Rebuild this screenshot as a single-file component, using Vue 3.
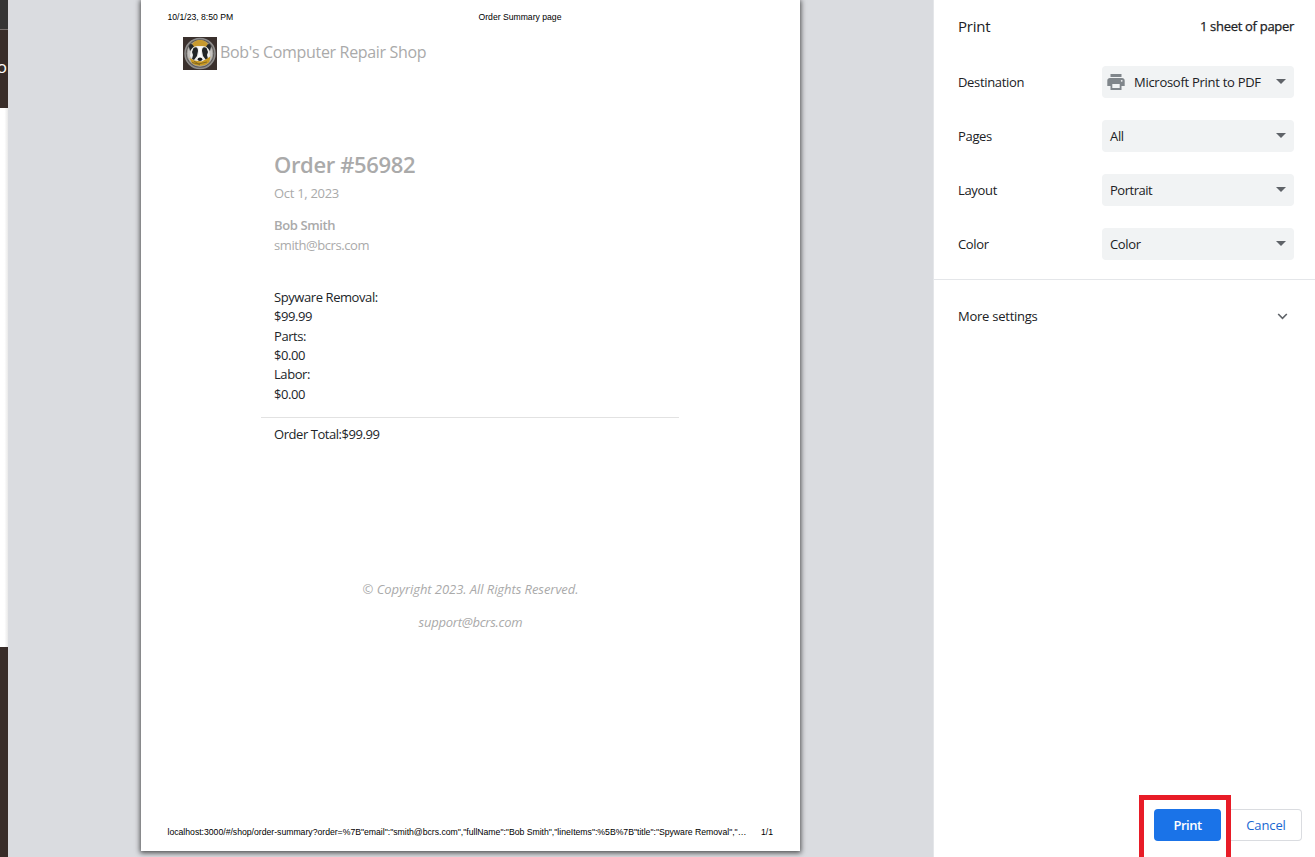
<script setup>
const settings = [
  { label: 'Destination', value: 'Microsoft Print to PDF', cls: 'dest', printer: true },
  { label: 'Pages', value: 'All', cls: 'pages' },
  { label: 'Layout', value: 'Portrait', cls: 'layout' },
  { label: 'Color', value: 'Color', cls: 'color' },
]
const lines = [
  { title: 'Spyware Removal:', price: '$99.99' },
  { title: 'Parts:', price: '$0.00' },
  { title: 'Labor:', price: '$0.00' },
]
const url = 'localhost:3000/#/shop/order-summary?order=%7B"email":"smith@bcrs.com","fullName":"Bob Smith","lineItems":%5B%7B"title":"Spyware Removal","…'
</script>

<template>
  <div class="screen">
    <div class="behind">
      <div class="toolbar"></div>
      <div class="header"><span>o</span></div>
      <div class="content"></div>
      <div class="footer"></div>
    </div>

    <main class="preview">
      <article class="sheet">
        <div class="sheet-head">
          <span class="stamp">10/1/23, 8:50 PM</span>
          <span class="doc-title">Order Summary page</span>
        </div>
        <div class="brand">
          <svg class="logo" viewBox="0 0 34 33">
            <rect width="34" height="33" fill="#3a302d" />
            <circle cx="17" cy="16.500" r="15" fill="#605c5a" stroke="#8f8e8d" stroke-width="1.500" />
            <circle cx="17" cy="16.500" r="12.800" fill="#c4c2bf" stroke="#a5a3a0" stroke-width=".8" />
            <path d="M7.500 12C9 5.500 12 3 17 3s8.500 2.500 9.500 9l-4 1H11z" fill="#c79a30" />
            <path d="M6 10c0-3 2-4 4-2l1 2-4 4zM28 10c0-3-2-4-4-2l-1 2 4 4z" fill="#25282b" />
            <path d="M8 13c2-4 5-4 9-4s7 0 9 4l1 6-4 5-6 3-6-3-4-5z" fill="#eeeeec" />
            <path d="M10.500 11c3-2 4.500 0 4.500 3l-1 5-3 4-2-1 1-4-1-3zM23.500 11c-3-2-4.500 0-4.500 3l1 5 3 4 2-1-1-4 1-3z" fill="#222527" />
            <path d="M6.500 21l5 2.500 4 .5 3 .5 4-2 5-3-1 5c-3 5-14 6-18 1z" fill="#c99922" />
            <path d="M15.500 10h3l-.5 6 1.500 5-2.500 2-2.500-2 1.500-5z" fill="#fff" />
            <ellipse cx="17" cy="22.300" rx="2.300" ry="1.700" fill="#17191b" />
            <path d="M9 25.500l6 1.500 9-2M11 24l6 4" fill="none" stroke="#735d22" stroke-width=".8" />
          </svg>
          <span class="brand-name">Bob's Computer Repair Shop</span>
        </div>
        <section class="order">
          <h1><span>Order #56982</span></h1>
          <p class="date">Oct 1, 2023</p>
          <p class="customer">Bob Smith</p>
          <p class="email">smith@bcrs.com</p>
          <div class="lines">
            <template v-for="l in lines" :key="l.title">
              <p>{{ l.title }}</p>
              <p>{{ l.price }}</p>
            </template>
          </div>
        </section>
        <div class="total">Order Total:$99.99</div>
        <footer class="copy">
          <p class="rights">© Copyright 2023. All Rights Reserved.</p>
          <p class="support">support@bcrs.com</p>
        </footer>
        <div class="sheet-foot"><span class="url">{{ url }}</span><span>1/1</span></div>
      </article>
    </main>

    <aside class="panel">
      <header class="panel-head"><span class="heading">Print</span><span class="count">1 sheet of paper</span></header>
      <div class="settings">
        <div v-for="s in settings" :key="s.label" class="row">
          <span class="label" :class="'l-' + s.cls">{{ s.label }}</span>
          <div class="select">
            <svg v-if="s.printer" class="printer" viewBox="0 0 18 16">
              <path d="M3.500 0h11v3h-11zM3 4h12c1.600 0 2.700 1.100 2.700 2.700V12H14V9H4v3H.3V6.700C.3 5.100 1.400 4 3 4z" fill="#80868b" />
              <path d="M4.400 9h9.200v6H4.400z" fill="#f1f3f4" stroke="#80868b" stroke-width="1.800" />
              <circle cx="14.700" cy="6.800" r=".9" fill="#f1f3f4" />
            </svg>
            <span class="value" :class="'v-' + s.cls">{{ s.value }}</span>
            <svg class="arrow" viewBox="0 0 10 5"><path d="M0 0h10L5 5z" fill="#5f6368" /></svg>
          </div>
        </div>
      </div>
      <div class="more">
        <span>More settings</span>
        <svg viewBox="0 0 10 7"><path d="M.7 1l4.300 4.300L9.300 1" fill="none" stroke="#5f6368" stroke-width="1.600" /></svg>
      </div>
      <div class="actions">
        <button class="cancel">Cancel</button>
        <div class="highlight"><button class="print">Print</button></div>
      </div>
    </aside>
  </div>
</template>

<style>
body { margin: 0; overflow: hidden; }
</style>

<style scoped>
* { box-sizing: border-box; }
p, h1 { margin: 0; }
.screen { display: flex; width: 1315px; height: 857px; overflow: hidden; background: #dadce0; font-family: "Open Sans", "Noto Sans", sans-serif; color: #202124; white-space: nowrap; }
.behind { width: 8px; display: flex; flex-direction: column; overflow: hidden; background: #fff; }
.toolbar { height: 30px; background: #353535; border-bottom: 1px solid #77716f; }
.header { height: 78px; background: #382d29; color: #fff; display: flex; justify-content: flex-end; padding: 24px 1px 0 0; font-size: 17px; line-height: 26px; }
.header span { width: 7px; display: flex; justify-content: flex-end; }
.content { height: 539px; background: linear-gradient(90deg, #fff 55%, #e8e8e8); }
.footer { flex: 1; background: #382d29; }
.preview { width: 925px; padding-left: 133px; }
.sheet { width: 659px; height: 851px; background: #fff; box-shadow: 0 1px 5px 1px rgba(0,0,0,.65); display: flex; flex-direction: column; }
.sheet-head { height: 37px; padding: 11px 0 0 26.500px; display: flex; font: 8.650px/12px "Liberation Sans", Arial, sans-serif; color: #000; }
.stamp { width: 311px; }
.brand { height: 33px; margin-left: 42px; display: flex; align-items: center; color: #aaa; }
.logo { width: 34px; height: 33px; margin-right: 3px; }
.brand-name { font-size: 16px; line-height: 30px; letter-spacing: -.33px; margin-top: -3px; }
.order { height: 347px; padding: 79px 0 0 133px; color: #aaa; font-size: 13px; line-height: 20px; }
h1 { font-size: 22px; line-height: 30px; font-weight: 600; letter-spacing: -.36px; }
.date { margin-top: 4px; letter-spacing: -.3px; }
.customer { margin-top: 12px; font-weight: 600; letter-spacing: -.37px; }
.email { letter-spacing: -.42px; }
.lines { margin-top: 33px; color: #212529; line-height: 19.350px; letter-spacing: -.42px; }
.total { width: 418px; height: 145px; margin-left: 120px; padding: 6px 0 0 13px; border-top: 1px solid #e2e2e2; font-size: 13px; line-height: 20px; color: #212529; letter-spacing: -.45px; }
.copy { height: 262px; padding-top: 17px; text-align: center; font-style: italic; color: #aaa; font-size: 13px; line-height: 20px; letter-spacing: -.06px; }
.support { margin-top: 13px; letter-spacing: -.25px; }
.sheet-foot { padding: 2px 27px 0 26.500px; display: flex; justify-content: space-between; font: 8.700px/12px "Liberation Sans", Arial, sans-serif; color: #000; }
.url { letter-spacing: -.02px; }
.panel { width: 382px; background: #fff; border-left: 1px solid #e4e6e9; display: flex; flex-direction: column; font-size: 13px; letter-spacing: -.33px; }
.panel-head { height: 53px; padding: 0 21px 1px 24px; display: flex; justify-content: space-between; align-items: center; }
.heading { font-size: 15px; letter-spacing: -.2px; }
.count { font-weight: 500; -webkit-text-stroke: .25px #202124; letter-spacing: -.3px; }
.settings { height: 227px; padding: 13px 21px 0 24px; display: flex; flex-direction: column; gap: 22px; border-bottom: 1px solid #e4e6e9; }
.row { height: 32px; display: flex; justify-content: space-between; align-items: center; }
.select { width: 192px; height: 32px; border-radius: 4px; background: #f1f3f4; display: flex; align-items: center; padding: 0 8px; }
.v-dest { letter-spacing: -.28px; }
.v-layout { letter-spacing: -.48px; }
.printer { width: 18px; height: 16px; margin: 0 9px 0 -3px; }
.arrow { width: 10px; height: 5px; margin: 0 0 1px auto; }
.more { height: 72px; padding: 0 27px 0 24px; display: flex; justify-content: space-between; align-items: center; letter-spacing: -.25px; }
.more svg { width: 11px; height: 7px; }
.actions { margin-top: auto; height: 62px; display: flex; flex-direction: row-reverse; padding-right: 13px; }
button { height: 32px; padding: 0; font: 500 13px/30px "Open Sans", sans-serif; border-radius: 4px; }
.cancel { width: 71px; margin-top: 14px; border: 1px solid #dadce0; border-left: 0; border-radius: 0 4px 4px 0; background: #fff; color: #1967d2; letter-spacing: -.1px; }
.highlight { width: 92px; height: 67px; border: 5px solid #e81c27; padding: 9px 0 0 10px; }
.print { width: 67px; border: 0; background: #1a73e8; color: #fff; font-weight: 600; letter-spacing: -.5px; }
</style>
